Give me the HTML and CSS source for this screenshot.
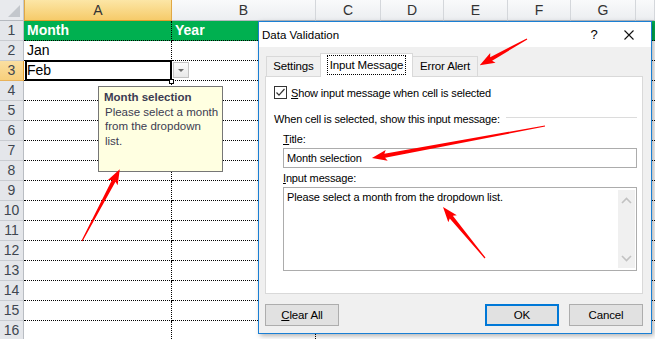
FILE: index.html
```html
<!DOCTYPE html>
<html lang="en">
<head>
    <meta charset="UTF-8">
    <title>Data Validation - Input Message</title>
    <link rel="stylesheet" href="styles.css">
</head>
<body>

<div class="sheet">
    <div class="col-heads">
        <div class="corner"><span class="corner-tri"></span></div>
        <div class="ch ch-sel">A</div>
        <div class="ch">B</div>
        <div class="ch">C</div>
        <div class="ch">D</div>
        <div class="ch">E</div>
        <div class="ch">F</div>
        <div class="ch">G</div>
        <div class="ch"></div>
    </div>

    <div class="row row-green"><div class="rh">1</div><div class="c ca">Month</div><div class="c cb">Year</div><div class="c"></div></div>
    <div class="row"><div class="rh">2</div><div class="c ca">Jan</div><div class="c cb"></div><div class="c"></div></div>
    <div class="row"><div class="rh rh-sel">3</div><div class="c ca active">Feb<span class="fill-handle"></span></div><div class="c cb"><span class="dd-btn"></span></div><div class="c"></div></div>
    <div class="row"><div class="rh">4</div><div class="c ca"></div><div class="c cb"></div><div class="c"></div></div>
    <div class="row"><div class="rh">5</div><div class="c ca"></div><div class="c cb"></div><div class="c"></div></div>
    <div class="row"><div class="rh">6</div><div class="c ca"></div><div class="c cb"></div><div class="c"></div></div>
    <div class="row"><div class="rh">7</div><div class="c ca"></div><div class="c cb"></div><div class="c"></div></div>
    <div class="row"><div class="rh">8</div><div class="c ca"></div><div class="c cb"></div><div class="c"></div></div>
    <div class="row"><div class="rh">9</div><div class="c ca"></div><div class="c cb"></div><div class="c"></div></div>
    <div class="row"><div class="rh">10</div><div class="c ca"></div><div class="c cb"></div><div class="c"></div></div>
    <div class="row"><div class="rh">11</div><div class="c ca"></div><div class="c cb"></div><div class="c"></div></div>
    <div class="row"><div class="rh">12</div><div class="c ca"></div><div class="c cb"></div><div class="c"></div></div>
    <div class="row"><div class="rh">13</div><div class="c ca"></div><div class="c cb"></div><div class="c"></div></div>
    <div class="row"><div class="rh">14</div><div class="c ca"></div><div class="c cb"></div><div class="c"></div></div>
    <div class="row"><div class="rh">15</div><div class="c ca"></div><div class="c cb"></div><div class="c"></div></div>
    <div class="row"><div class="rh">16</div><div class="c ca"></div><div class="c cb"></div><div class="c"></div></div>

    <!-- input message tooltip shown next to the cell -->
    <div class="tip">
        <div class="tip-title">Month selection</div>
        <div class="tip-text">Please select a month<br>from the dropdown<br>list.</div>
    </div>

    <div class="dialog">
        <div class="titlebar">
            <span class="dlg-title">Data Validation</span>
            <span class="tb-help">?</span>
            <span class="tb-close">
                <svg width="10" height="10" viewBox="0 0 10 10"><path d="M0.5 0.5L9.5 9.5M9.5 0.5L0.5 9.5" stroke="#111" stroke-width="1.1" fill="none"/></svg>
            </span>
        </div>

        <div class="dlg-body">
            <div class="tabs">
                <div class="tab">Settings</div>
                <div class="tab tab-on"><span class="focus">Input Message</span></div>
                <div class="tab">Error Alert</div>
            </div>

            <div class="panel">
                <div class="check-row">
                    <span class="checkbox">
                        <svg width="11" height="11" viewBox="0 0 11 11"><path d="M1.5 5.5L4 8.2L9.5 2" stroke="#333" stroke-width="1.2" fill="none"/></svg>
                    </span>
                    <span><u>S</u>how input message when cell is selected</span>
                </div>

                <div class="group-label">
                    <span>When cell is selected, show this input message:</span>
                    <span class="group-line"></span>
                </div>

                <div class="field">
                    <div class="lbl"><u>T</u>itle:</div>
                    <div class="input">Month selection</div>
                </div>

                <div class="field field-msg">
                    <div class="lbl"><u>I</u>nput message:</div>
                    <div class="textarea">
                        <div class="ta-text">Please select a month from the dropdown list.</div>
                        <div class="scroll">
                            <svg width="11" height="7" viewBox="0 0 11 7"><path d="M1 6L5.5 1.5L10 6" stroke="#c2c2c2" stroke-width="1.6" fill="none"/></svg>
                            <svg width="11" height="7" viewBox="0 0 11 7"><path d="M1 1L5.5 5.5L10 1" stroke="#c2c2c2" stroke-width="1.6" fill="none"/></svg>
                        </div>
                    </div>
                </div>
            </div>

            <div class="buttons">
                <div class="btn"><u>C</u>lear All</div>
                <div class="spacer"></div>
                <div class="btn btn-default">OK</div>
                <div class="btn">Cancel</div>
            </div>
        </div>
    </div>

    <!-- red annotation arrows -->
    <svg class="arrows" width="655" height="339" viewBox="0 0 655 339">
        <g fill="#ff0000">
            <path transform="translate(82,241) rotate(-62.2)" d="M0,-0.6 L68,-2 L66,-5.5 L81,0 L66,5.5 L68,2 L0,0.6Z"/>
            <path transform="translate(527,39) rotate(151)" d="M0,-0.6 L41,-2 L39,-5.5 L54,0 L39,5.5 L41,2 L0,0.6Z"/>
            <path transform="translate(545,126) rotate(169.5)" d="M0,-0.6 L163,-2 L161,-5.5 L176,0 L161,5.5 L163,2 L0,0.6Z"/>
            <path transform="translate(485,258) rotate(-129.5)" d="M0,-0.6 L53,-2 L51,-5.5 L66,0 L51,5.5 L53,2 L0,0.6Z"/>
        </g>
    </svg>
</div>

</body>
</html>
```

FILE: styles.css
```css
body {
    margin: 0;
    padding: 0;
    background: #fff;
    font-family: "Liberation Sans", Arial, sans-serif;
}

.sheet {
    position: relative;
    width: 655px;
    height: 339px;
    overflow: hidden;
    background: #fff;
}

/* column headers */
.col-heads {
    display: grid;
    grid-template-columns: 24px 148px 144px 65px 63px 64px 63px 65px 1fr;
    height: 21px;
}

.corner {
    position: relative;
    box-sizing: border-box;
    background: #e8eaed;
    border-right: 1px solid #c4c8cd;
    border-bottom: 1px solid #b5b9bf;
}

.corner-tri {
    position: absolute;
    right: 3px;
    bottom: 3px;
    width: 0;
    height: 0;
    border-left: 12px solid transparent;
    border-bottom: 12px solid #c3c7cc;
}

.ch {
    box-sizing: border-box;
    background: linear-gradient(#f9fafb, #eceef1);
    border-right: 1px solid #d4d7db;
    border-bottom: 1px solid #b5b9bf;
    text-align: center;
    font-size: 14px;
    line-height: 20px;
    color: #333;
}

.ch-sel {
    background: linear-gradient(#fce6a6, #f6cb6a);
    border-right-color: #e0a845;
    border-bottom: 1px solid #e39c2a;
    border-left: 1px solid #e0a845;
}

/* grid rows */
.row {
    display: grid;
    grid-template-columns: 24px 148px 144px 1fr;
    height: 20px;
}

.rh {
    box-sizing: border-box;
    background: #e4e6ea;
    border-right: 1px solid #b9bdc3;
    border-bottom: 1px solid #c9ccd1;
    text-align: center;
    font-size: 14px;
    line-height: 19px;
    color: #404650;
}

.rh-sel {
    background: linear-gradient(#fbdfa1, #f7cf7c);
    border-right-color: #e39c2a;
    border-bottom-color: #e8b25a;
}

.c {
    position: relative;
    box-sizing: border-box;
    border-bottom: 1px dotted #000;
    font-size: 14px;
    line-height: 19px;
    padding-left: 3px;
    color: #000;
}

.ca,
.cb {
    border-right: 1px dotted #000;
}

.row-green .c {
    background: #00b050;
    color: #fff;
    font-weight: bold;
}

.active::after {
    content: "";
    position: absolute;
    left: 1px;
    top: -1px;
    right: -1px;
    bottom: -1px;
    border: 2px solid #000;
}

.fill-handle {
    position: absolute;
    right: -3px;
    bottom: -4px;
    width: 3px;
    height: 3px;
    background: #fff;
    border: 1px solid #000;
    z-index: 2;
}

.dd-btn {
    position: absolute;
    left: 1px;
    top: 1px;
    width: 16px;
    height: 16px;
    box-sizing: border-box;
    background: linear-gradient(#fafafa, #e9e9e9);
    border: 1px solid #c3c3c3;
}

.dd-btn::after {
    content: "";
    position: absolute;
    left: 4px;
    top: 6px;
    border-left: 3px solid transparent;
    border-right: 3px solid transparent;
    border-top: 3px solid #6d6d6d;
}

/* tooltip */
.tip {
    position: absolute;
    left: 98px;
    top: 86px;
    width: 125px;
    height: 86px;
    box-sizing: border-box;
    background: #ffffe1;
    border: 1px solid #767676;
    padding: 3px 0 0 5px;
    font-size: 11.5px;
    line-height: 14.5px;
    color: #3c3c52;
    white-space: nowrap;
}

.tip-title {
    font-weight: bold;
}

.tip-text {
    padding-left: 1px;
}

/* dialog */
.dialog {
    position: absolute;
    left: 258px;
    top: 21px;
    width: 394px;
    height: 313px;
    box-sizing: border-box;
    border: 1px solid #1a7fd4;
    box-shadow: 2px 2px 5px rgba(0, 0, 0, 0.3);
    display: flex;
    flex-direction: column;
    font-size: 11px;
    letter-spacing: -0.15px;
    color: #000;
}

.titlebar {
    display: flex;
    align-items: center;
    height: 25px;
    background: #fff;
}

.dlg-title {
    flex: 1;
    padding-left: 3px;
    font-size: 11.5px;
    letter-spacing: 0;
}

.tb-help {
    width: 24px;
    text-align: center;
    font-size: 13px;
}

.tb-close {
    width: 45px;
    display: flex;
    justify-content: center;
    align-items: center;
}

.dlg-body {
    flex: 1;
    background: #f0f0f0;
    padding: 6px 8px 0 6px;
}

.tabs {
    display: flex;
    align-items: flex-end;
    height: 23px;
    padding-left: 1px;
}

.tab {
    box-sizing: border-box;
    height: 20px;
    line-height: 19px;
    border: 1px solid #d9d9d9;
    border-bottom: none;
    background: #f0f0f0;
    text-align: center;
    margin-right: -1px;
    font-size: 11.5px;
}

.tab:nth-child(1) { width: 55px; }
.tab:nth-child(2) { width: 93px; }
.tab:nth-child(3) { width: 66px; }

.tab-on {
    height: 24px;
    background: #fff;
    margin-bottom: -1px;
    position: relative;
    z-index: 1;
    padding-top: 3px;
    line-height: 16px;
}

.focus {
    display: inline-block;
    outline: 1px dotted #000;
    outline-offset: 1px;
    padding: 0 1px;
}

.panel {
    height: 218px;
    box-sizing: border-box;
    background: #fff;
    border: 1px solid #d9d9d9;
    padding: 9px 5px 0 8px;
    display: flex;
    flex-direction: column;
}

.check-row {
    display: flex;
    align-items: center;
    height: 13px;
}

.checkbox {
    width: 13px;
    height: 13px;
    box-sizing: border-box;
    border: 1px solid #333;
    background: #fff;
    display: flex;
    justify-content: center;
    align-items: center;
    margin-right: 4px;
}

.group-label {
    display: flex;
    align-items: center;
    margin-top: 13px;
    height: 14px;
}

.group-line {
    flex: 1;
    height: 1px;
    background: #dcdcdc;
    margin-left: 6px;
    margin-top: -3px;
}

.field {
    padding-left: 9px;
    margin-top: 6px;
}

.field-msg {
    margin-top: 3px;
}

.lbl {
    height: 14px;
    line-height: 14px;
    margin-bottom: 2px;
}

.input {
    height: 20px;
    box-sizing: border-box;
    border: 1px solid #acacac;
    padding-left: 3px;
    line-height: 18px;
}

.textarea {
    height: 84px;
    box-sizing: border-box;
    border: 1px solid #acacac;
    display: flex;
}

.ta-text {
    flex: 1;
    padding: 2px 0 0 3px;
    line-height: 15px;
}

.scroll {
    width: 17px;
    margin: 2px 1px 2px 0;
    background: #f0f0f0;
    display: flex;
    flex-direction: column;
    justify-content: space-between;
    align-items: center;
    padding: 7px 0 6px;
    box-sizing: border-box;
}

.buttons {
    display: flex;
    gap: 10px;
    margin-top: 10px;
}

.spacer {
    flex: 1;
}

.btn {
    width: 74px;
    height: 22px;
    box-sizing: border-box;
    border: 1px solid #adadad;
    background: #e1e1e1;
    text-align: center;
    line-height: 20px;
    font-size: 11.5px;
}

.btn-default {
    border: 2px solid #0078d7;
    line-height: 18px;
}

.arrows {
    position: absolute;
    left: 0;
    top: 0;
    pointer-events: none;
    z-index: 5;
}
```
